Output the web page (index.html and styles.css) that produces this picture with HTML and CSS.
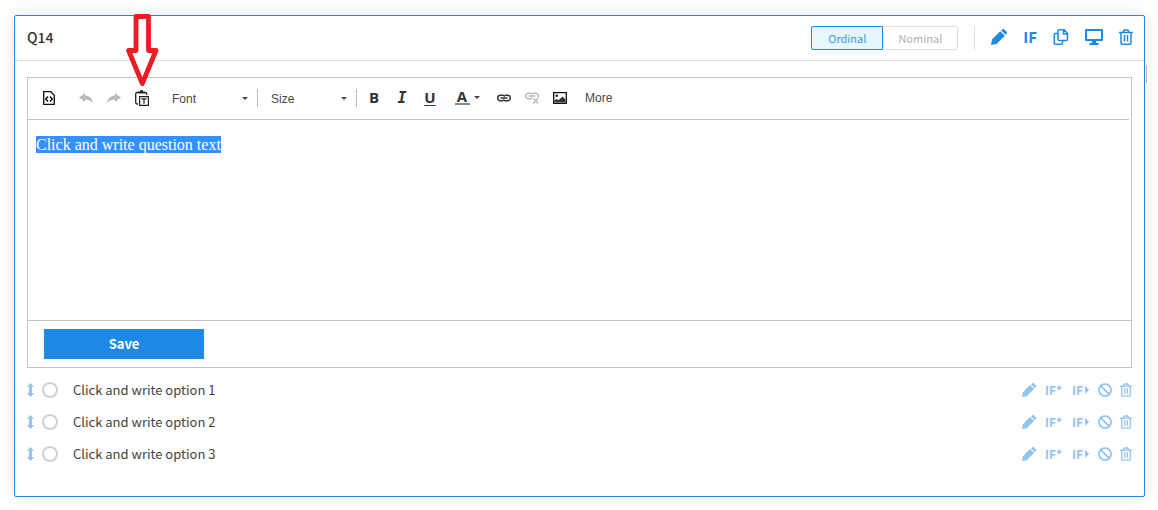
FILE: index.html
```html
<!DOCTYPE html>
<html lang="en">
<head>
    <title>Survey editor</title>
    <meta name="viewport" content="width=device-width, initial-scale=1.0">
    <meta charset="utf-8">
    <link rel="stylesheet" href="styles.css">
</head>

<body>
    <!-- shared icons -->
    <svg class="sprite" aria-hidden="true">
        <symbol id="pencil" viewBox="0 0 16 16">
            <path fill="currentColor" d="M0 16l1-5.500 8.300-8.300 4.500 4.500L5.500 15zM10.300 1.400l1-1a1.400 1.400 0 0 1 2 0l2.300 2.300a1.400 1.400 0 0 1 0 2l-1 1z"/>
        </symbol>
        <symbol id="trash" viewBox="0 0 14 16">
            <path fill="none" stroke="currentColor" stroke-width="1.500" d="M0 3.500h14M2 3.500v10.500q0 1.200 1.200 1.200h7.600q1.200 0 1.200-1.200V3.500M4 3.200L5 1h4l1 2.200M5.500 6v6.500M8.500 6v6.500"/>
        </symbol>
        <symbol id="ban" viewBox="0 0 14 14">
            <path fill="none" stroke="currentColor" stroke-width="1.700" d="M7 1a6 6 0 1 0 .01 0zM2.800 2.800l8.400 8.400"/>
        </symbol>
        <symbol id="updown" viewBox="0 0 7 14">
            <path fill="currentColor" d="M3.500 0L7 4H4.900v6H7l-3.500 4L0 10h2.100V4H0z"/>
        </symbol>
        <symbol id="link" viewBox="0 0 14 8">
            <path fill="none" stroke="currentColor" stroke-width="1.500" d="M6 1.200H3.500a2.800 2.800 0 0 0 0 5.600H6M8 1.200h2.500a2.800 2.800 0 0 1 0 5.600H8M3.500 4h7M6 1.200q1.500 0 1.500 1.500M8 6.800q-1.500 0-1.500-1.500"/>
        </symbol>
    </svg>

    <main class="question">
        <header class="question-header">
            <h1>Q14</h1>
            <div class="scale">
                <button type="button" class="scale-btn active">Ordinal</button>
                <button type="button" class="scale-btn">Nominal</button>
            </div>
            <div class="actions">
                <button type="button" aria-label="Edit"><svg width="16" height="16"><use href="#pencil"/></svg></button>
                <button type="button">IF</button>
                <button type="button" aria-label="Copy">
                    <svg width="16" height="16" viewBox="0 0 16 16" fill="none" stroke="currentColor" stroke-width="1.500">
                        <path d="M6 .8h5l3.500 3.500v6.200q0 1-1 1H6q-1 0-1-1V1.800q0-1 1-1zM10.500 1v4h4M5 4.500H2.300q-1 0-1 1v8.700q0 1 1 1h6.200q1 0 1-1v-2.700"/>
                    </svg>
                </button>
                <button type="button" aria-label="Preview">
                    <svg width="18" height="16" viewBox="0 0 18 16">
                        <path fill="none" stroke="currentColor" stroke-width="2" stroke-linejoin="round" d="M1 1h16v10H1z"/>
                        <path fill="currentColor" d="M7 12h4v2h2.500v2h-9v-2H7z"/>
                    </svg>
                </button>
                <button type="button" aria-label="Delete"><svg width="14" height="16"><use href="#trash"/></svg></button>
            </div>
        </header>

        <section class="editor">
            <div class="toolbar">
                <button type="button" class="tool" aria-label="Source">
                    <svg width="12" height="14" viewBox="0 0 12 14" fill="none" stroke="#111">
                        <path stroke-width="1.300" d="M.7.700h7l3.600 3.600v9H.7z"/>
                        <path stroke-width="1.500" d="M5 5.500L2.700 8 5 10.500M7 5.500L9.300 8 7 10.500"/>
                    </svg>
                </button>
                <div class="tool-group history">
                    <button type="button" class="tool muted" aria-label="Undo">
                        <svg width="14" height="10" viewBox="0 0 14 10"><path fill="currentColor" d="M0 4.500L6 0v2.600q6.500.200 8 7.400Q11 6.600 6 6.800V9z"/></svg>
                    </button>
                    <button type="button" class="tool muted" aria-label="Redo">
                        <svg width="14" height="10" viewBox="0 0 14 10"><path fill="currentColor" d="M14 4.500L8 0v2.600Q1.500 2.800 0 10q3-3.400 8-3.200V9z"/></svg>
                    </button>
                    <button type="button" class="tool" aria-label="Paste as text">
                        <svg width="14" height="16" viewBox="0 0 14 16" fill="none" stroke="#222">
                            <path stroke-width="1.300" d="M3 2.500H2Q.7 2.500.7 4v8.500Q.7 14 2 14h1M10 2.500q1.800 0 1.800 1.500v1"/>
                            <path fill="#222" stroke="none" d="M3 3.500V1.500h2V.2h3v1.300h2v2z"/>
                            <path stroke-width="1.200" d="M4.600 6.600h8.800v8.800H4.600zM6.500 8.800h5M9 8.800v5"/>
                        </svg>
                    </button>
                </div>
                <div class="tool-group combos">
                    <div class="combo">
                        <select aria-label="Font"><option>Font</option></select>
                    </div>
                    <div class="combo">
                        <select aria-label="Size"><option>Size</option></select>
                    </div>
                </div>
                <div class="tool-group styles">
                    <button type="button" class="tool letter">B</button>
                    <button type="button" class="tool letter italic">I</button>
                    <button type="button" class="tool letter underline">U</button>
                    <button type="button" class="tool color" aria-label="Text colour"><span>A</span><i class="caret"></i></button>
                </div>
                <button type="button" class="tool" aria-label="Link"><svg width="14" height="8"><use href="#link"/></svg></button>
                <button type="button" class="tool muted" aria-label="Unlink">
                    <svg width="14" height="13" viewBox="0 0 14 13">
                        <use href="#link" width="14" height="8" y="1"/>
                        <path stroke="#fff" stroke-width="4" d="M8 7l5 5M13 7l-5 5"/>
                        <path stroke="currentColor" stroke-width="1.500" d="M8.500 7.500l4.500 5M13 7.500l-4.500 5"/>
                    </svg>
                </button>
                <button type="button" class="tool" aria-label="Image">
                    <svg width="14" height="12" viewBox="0 0 14 12">
                        <path fill="none" stroke="#111" stroke-width="1.300" d="M.7.700h12.600v10.600H.7z"/>
                        <circle cx="3.700" cy="3.700" r="1.300" fill="#222"/>
                        <path fill="#333" d="M1.500 10.500V8.500l2-1.500 2 1.300L9.500 4.500l3 3v3z"/>
                    </svg>
                </button>
                <button type="button" class="more">More</button>
            </div>

            <div class="editor-body" contenteditable="true" role="textbox" aria-label="Question text"><span class="selected">Click and write question text</span></div>

            <div class="editor-footer">
                <button type="button" class="save">Save</button>
            </div>
        </section>

        <ul class="options">
            <li class="option">
                <svg class="drag" width="7" height="14"><use href="#updown"/></svg>
                <input type="radio" name="answer" id="option1">
                <label for="option1">Click and write option 1</label>
                <div class="option-actions">
                    <button type="button" aria-label="Edit"><svg width="14" height="14"><use href="#pencil"/></svg></button>
                    <button type="button" class="cond">IF*</button>
                    <button type="button" class="cond">IF<i class="play"></i></button>
                    <button type="button" aria-label="Disable"><svg width="14" height="14"><use href="#ban"/></svg></button>
                    <button type="button" aria-label="Delete"><svg width="12" height="14"><use href="#trash"/></svg></button>
                </div>
            </li>
            <li class="option">
                <svg class="drag" width="7" height="14"><use href="#updown"/></svg>
                <input type="radio" name="answer" id="option2">
                <label for="option2">Click and write option 2</label>
                <div class="option-actions">
                    <button type="button" aria-label="Edit"><svg width="14" height="14"><use href="#pencil"/></svg></button>
                    <button type="button" class="cond">IF*</button>
                    <button type="button" class="cond">IF<i class="play"></i></button>
                    <button type="button" aria-label="Disable"><svg width="14" height="14"><use href="#ban"/></svg></button>
                    <button type="button" aria-label="Delete"><svg width="12" height="14"><use href="#trash"/></svg></button>
                </div>
            </li>
            <li class="option">
                <svg class="drag" width="7" height="14"><use href="#updown"/></svg>
                <input type="radio" name="answer" id="option3">
                <label for="option3">Click and write option 3</label>
                <div class="option-actions">
                    <button type="button" aria-label="Edit"><svg width="14" height="14"><use href="#pencil"/></svg></button>
                    <button type="button" class="cond">IF*</button>
                    <button type="button" class="cond">IF<i class="play"></i></button>
                    <button type="button" aria-label="Disable"><svg width="14" height="14"><use href="#ban"/></svg></button>
                    <button type="button" aria-label="Delete"><svg width="12" height="14"><use href="#trash"/></svg></button>
                </div>
            </li>
        </ul>

        <!-- points at the paste button -->
        <svg class="pointer" width="35" height="74" viewBox="0 0 35 74" aria-hidden="true">
            <path fill="#fff" stroke="#ed1c24" stroke-width="4.800" stroke-linejoin="round" d="M11 3.500h12.500v34H31L17.300 70.500 3.600 37.500H11z"/>
        </svg>
        <span class="side-mark"></span>
    </main>
</body>
</html>
```

FILE: styles.css
```css
*{
    box-sizing: border-box;
}

body{
    margin: 0;
    padding: 15px 13px 13px 14px;
    background: #fff;
    color: #333;
    font-family: "Noto Sans CJK JP", "Noto Sans", sans-serif;
    font-size: 13px;
    line-height: 20px;
}

button{
    display: flex;
    align-items: center;
    justify-content: center;
    padding: 0;
    border: none;
    background: none;
    color: inherit;
    font: inherit;
    cursor: pointer;
}

svg{
    display: block;
}

.sprite{
    position: absolute;
    width: 0;
    height: 0;
}

.question{
    position: relative;
    border: 1px solid #1e88e5;
    border-radius: 2px;
    box-shadow: 0 0 16px rgba(0, 0, 0, .07);
    padding-bottom: 26px;
}

/* header */
.question-header{
    display: flex;
    align-items: center;
    height: 45px;
    padding: 0 11px 0 12px;
    border-bottom: 1px solid #e0e0e0;
}

.question-header h1{
    flex: 1;
    margin: 0;
    padding-bottom: 2px;
    font-size: 14px;
    font-weight: 500;
}

.scale{
    display: flex;
    padding-right: 16px;
}

.scale-btn{
    height: 24px;
    padding: 0 15px;
    border: 1px solid #e0e0e0;
    border-left: none;
    border-radius: 0 2px 2px 0;
    color: #b0b0b0;
    font-size: 11px;
}

.scale-btn.active{
    padding: 0 16px;
    border: 1px solid #1e88e5;
    border-radius: 2px 0 0 2px;
    background: #e8f7ff;
    color: #3c97e8;
}

.actions{
    display: flex;
    gap: 16px;
    height: 24px;
    padding-left: 16px;
    padding-bottom: 2px;
    border-left: 1px solid #e0e0e0;
    color: #1e88e5;
}

.actions button{
    font-size: 15px;
    font-weight: 700;
}

/* editor */
.editor{
    margin: 16px 12px 0;
    border: 1px solid #c4c4c4;
}

.toolbar{
    display: flex;
    align-items: center;
    height: 42px;
    margin-right: 2px;
    padding: 0 0 2px 7px;
    border-bottom: 1px solid #c4c4c4;
    font-family: "Liberation Sans", Arial, sans-serif;
    font-size: 12px;
}

.tool{
    width: 28px;
    height: 24px;
}

.muted{
    color: #bbb;
}

.tool-group{
    display: flex;
    align-items: center;
}

.history{
    margin-left: 9px;
}

.combos,
.styles{
    margin-left: 3px;
}

.combo{
    position: relative;
    width: 99px;
    height: 18px;
    border-right: 1px solid #bcbcbc;
}

.combo::after,
.caret{
    content: "";
    border: 3px solid transparent;
    border-top-color: #444;
    border-bottom: none;
}

.combo::after{
    position: absolute;
    top: 8px;
    right: 9px;
    pointer-events: none;
}

.combo select{
    appearance: none;
    width: 100%;
    height: 18px;
    padding: 0 0 0 13px;
    border: none;
    background: none;
    color: #484848;
    font: inherit;
}

.letter,
.color{
    padding-bottom: 1px;
    color: #333;
    font-family: "Open Sans", sans-serif;
    font-size: 15px;
    font-weight: 700;
}

.italic{
    padding-bottom: 0;
    font-family: "DejaVu Sans Mono", monospace;
    font-style: italic;
}

.underline{
    text-decoration: underline;
    text-underline-offset: 2px;
}

.color{
    width: 46px;
    gap: 4px;
}

.color span{
    width: 15px;
    height: 16px;
    border-bottom: 2px solid #888;
    line-height: 14px;
}

.more{
    margin-left: 11px;
    color: #484848;
}

.editor-body{
    min-height: 200px;
    padding: 16px 8px;
    outline: none;
    font-family: "Liberation Serif", "Times New Roman", serif;
    font-size: 16px;
    line-height: 18px;
}

.selected{
    background: #3390ff;
    color: #fff;
}

.editor-footer{
    padding: 8px 16px;
    border-top: 1px solid #c4c4c4;
}

.save{
    width: 160px;
    height: 30px;
    background: #1e88e5;
    color: #fff;
    font-weight: 700;
}

/* answer options */
.options{
    margin: 6px 0 0;
    padding: 0 12px;
    list-style: none;
}

.option{
    display: flex;
    align-items: center;
    height: 32px;
    color: #444;
}

.drag{
    color: #90c2f2;
}

.option input{
    appearance: none;
    width: 16px;
    height: 16px;
    margin: 0 15px 0 8px;
    border: 2px solid #d0d0d0;
    border-radius: 50%;
}

.option label{
    flex: 1;
}

.option-actions{
    display: flex;
    align-items: center;
    gap: 8px;
    color: #90c2f2;
}

.cond{
    width: 19px;
    font-size: 12px;
    font-weight: 700;
}

.play{
    margin-left: 2px;
    border: 4px solid transparent;
    border-left-color: currentColor;
    border-right: none;
}

/* overlays */
.pointer{
    position: absolute;
    top: -3px;
    left: 110px;
}

.side-mark{
    position: absolute;
    top: 49px;
    right: -3px;
    width: 1px;
    height: 18px;
    background: #bbb;
}
```
